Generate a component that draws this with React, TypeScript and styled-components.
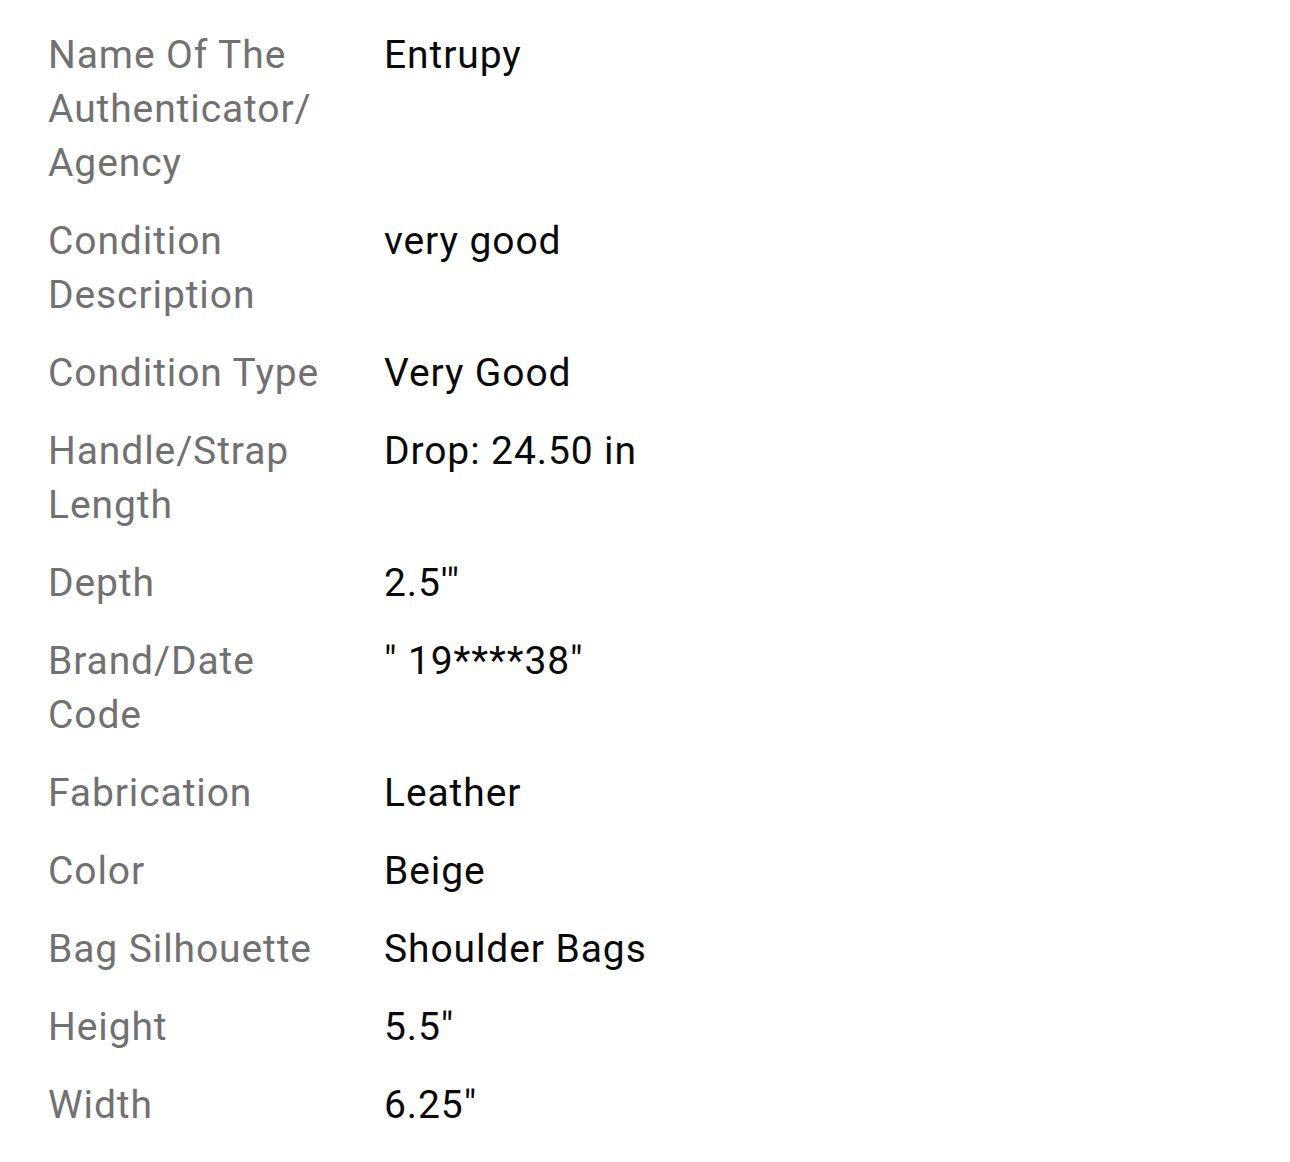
import styled, { createGlobalStyle } from 'styled-components'

interface Spec {
  label: string
  value: string
}

const specs: Spec[] = [
  { label: 'Name Of The Authenticator/ Agency', value: 'Entrupy' },
  { label: 'Condition Description', value: 'very good' },
  { label: 'Condition Type', value: 'Very Good' },
  { label: 'Handle/Strap Length', value: 'Drop: 24.50 in' },
  { label: 'Depth', value: '2.5\'"' },
  { label: 'Brand/Date Code', value: '" 19****38"' },
  { label: 'Fabrication', value: 'Leather' },
  { label: 'Color', value: 'Beige' },
  { label: 'Bag Silhouette', value: 'Shoulder Bags' },
  { label: 'Height', value: '5.5"' },
  { label: 'Width', value: '6.25"' },
]

export default function App() {
  return (
    <>
      <GlobalStyle />
      <List>
        {specs.map((s) => (
          <Row key={s.label}>
            <Label>{s.label}</Label>
            <Value>{s.value}</Value>
          </Row>
        ))}
      </List>
    </>
  )
}

const GlobalStyle = createGlobalStyle`
  html, body {
    margin: 0;
    background: #fff;
  }
  body {
    font-family: Roboto, "Noto Sans", sans-serif;
  }
`

const List = styled.dl`
  margin: 0;
  padding: 28px 0 0 48px;
  display: flex;
  flex-direction: column;
  gap: 24px;
`

const Row = styled.div`
  display: grid;
  grid-template-columns: 288px 1fr;
  column-gap: 48px;
  font-size: 39px;
  line-height: 54px;
  letter-spacing: 0.9px;
`

const Label = styled.dt`
  margin: 0;
  color: #717171;
`

const Value = styled.dd`
  margin: 0;
  color: #0a0a0a;
`
